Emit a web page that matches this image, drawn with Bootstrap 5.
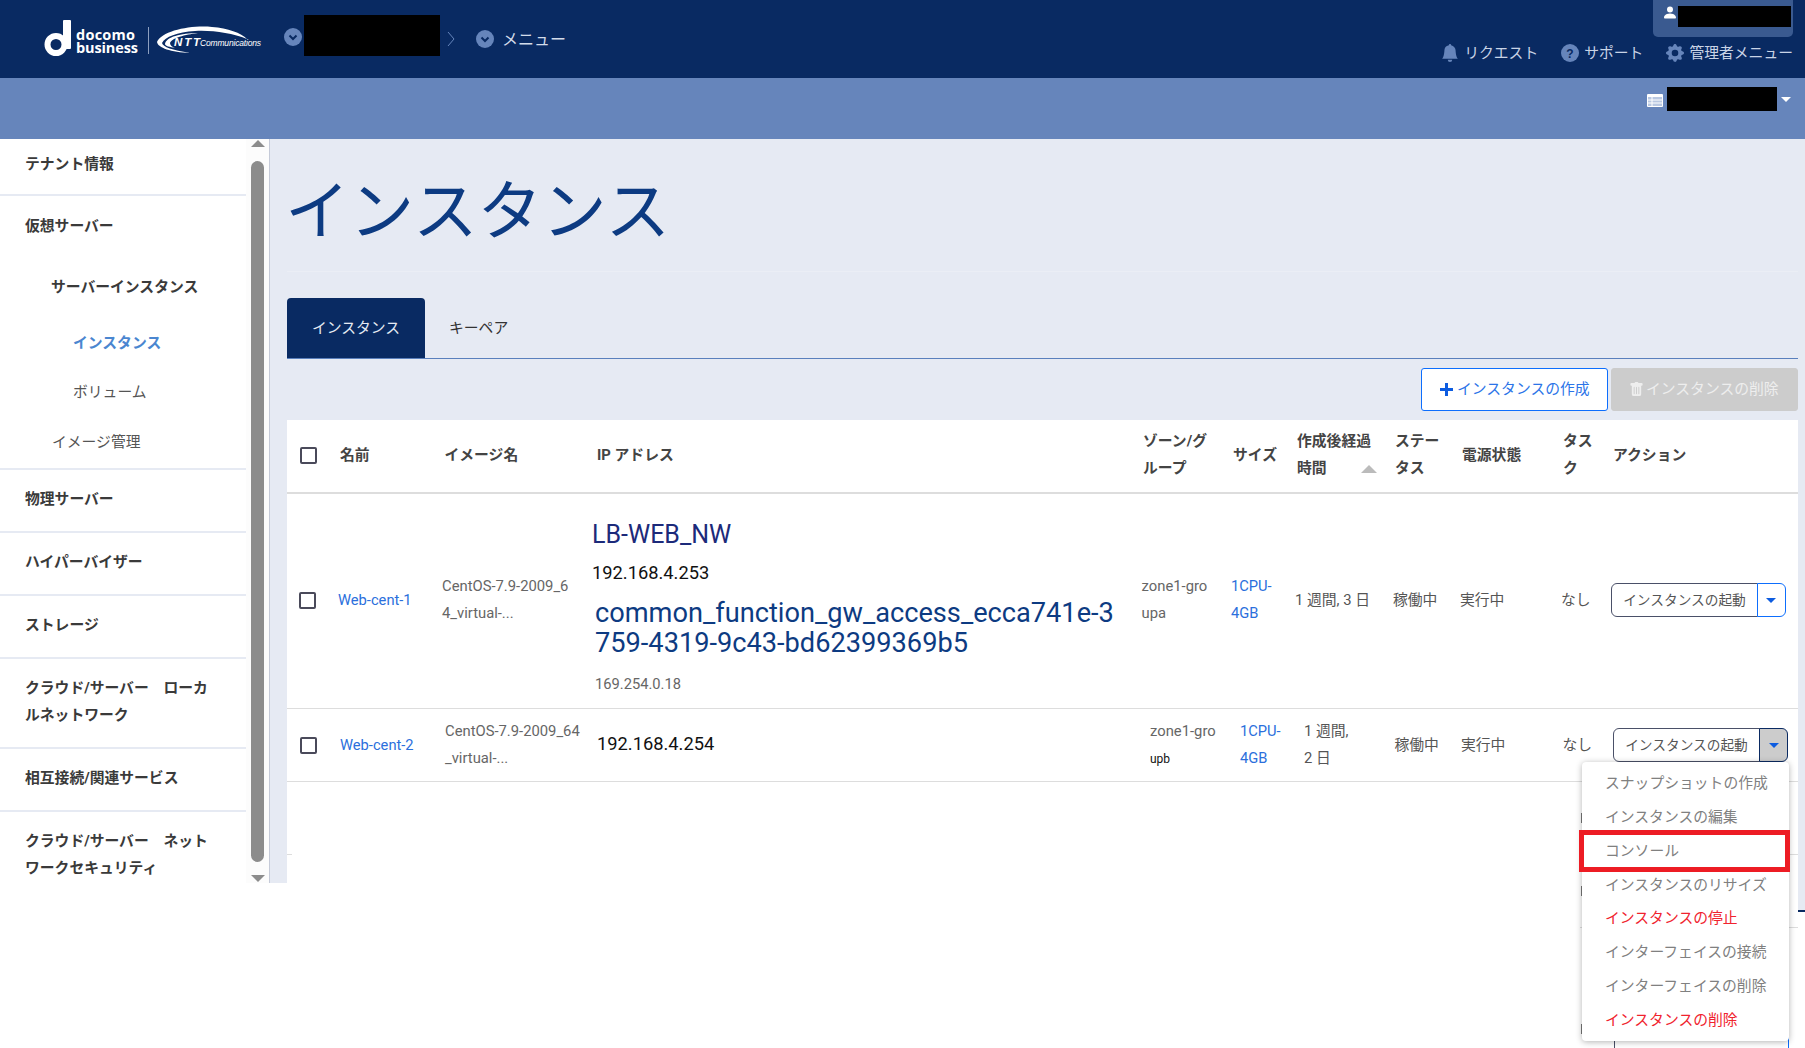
<!DOCTYPE html>
<html lang="ja">
<head>
<meta charset="utf-8">
<title>インスタンス</title>
<link href="https://cdn.jsdelivr.net/npm/bootstrap@5.3.0/dist/css/bootstrap.min.css" rel="stylesheet">
<style>
html,body{height:1048px;overflow:hidden;background:#fff;}
body{font-family:Roboto,"Noto Sans CJK JP",sans-serif;font-size:14.8px;color:#555;}
.top-bar{height:78px;background:#092a62;color:#c9d4e6;}
.logo-svg{width:265px;height:78px;display:block;flex:none;}
.crumb-ic{width:18px;height:18px;flex:none;}
.crumb-a{margin-left:19px;margin-bottom:4px;}
.mask-a{width:136px;height:41px;background:#000;margin-left:2px;margin-bottom:7px;}
.crumb-sep{width:8px;height:14px;margin-left:7px;flex:none;}
.crumb-b{margin-left:21px;}
.crumb-text{margin-left:8px;color:#d3dcea;font-size:16px;line-height:20px;margin-top:2px;}
.top-right{width:364px;padding-right:12px;}
.user-tab{width:140px;height:37px;background:#3a5a90;border-radius:0 0 5px 5px;padding:6px 0 0 11px;}
.user-ic{width:12px;height:13px;fill:#fff;margin-right:2px;flex:none;}
.mask-b{width:113px;height:21px;background:#000;}
.top-links{margin-top:6px;height:20px;font-size:14.8px;line-height:20px;white-space:nowrap;}
.top-links svg{width:18px;height:18px;fill:#6685bb;flex:none;margin-right:5px;}
.link-gap{margin-left:23px;}
.tenant-bar{height:61px;background:#6685bb;padding-right:14px;padding-bottom:20px;}
.tenant-ic{width:16px;height:13px;flex:none;margin-right:4px;margin-top:3px;}
.mask-c{width:110px;height:24px;background:#000;}
.tenant-caret{width:0;height:0;border-left:5px solid transparent;border-right:5px solid transparent;border-top:5px solid #fff;margin-left:4px;margin-top:2px;}
.side{width:270px;height:744px;flex:none;background:#fff;border-right:1px solid #c5cad8;overflow:hidden;}
.side-list{width:246px;flex:none;}
.side-sec{border-bottom:2px solid #e6eaf3;padding:16px 25px 18px;line-height:27px;font-weight:700;color:#3a3a3a;}
.side-sec.first{padding-top:12px;padding-bottom:16px;}
.side-sec.group{padding:17px 25px 12px;}
.side-sub{font-weight:700;color:#3a3a3a;padding:34px 0 0 26px;}
.side-act{font-weight:700;color:#4a86d0;padding:29px 0 0 48px;}
.side-plain{font-weight:400;color:#555;padding:22px 0 0 48px;}
.side-plain2{font-weight:400;color:#555;padding:23px 0 0 27px;}
.side-rail{width:23px;background:#fcfcfc;padding-left:5px;flex:none;}
.rail-up{width:0;height:0;border-left:7px solid transparent;border-right:7px solid transparent;border-bottom:7px solid #8c8c8c;margin-top:1px;}
.rail-thumb{width:13px;height:701px;margin-top:14px;background:#8c8c8c;border-radius:7px;}
.rail-down{width:0;height:0;border-left:7px solid transparent;border-right:7px solid transparent;border-top:7px solid #8c8c8c;margin-top:13px;}
.gut-l{width:17px;height:744px;background:#e6eaf3;flex:none;}
.gut-r{width:7px;height:773px;background:#e6eaf3;border-bottom:2px solid #0a2a62;flex:none;}
.center{width:1511px;flex:none;}
.upper{background:#e6eaf3;height:281px;}
.title-wrap{height:133px;border-bottom:1px solid #ebeef5;padding-top:31px;}
.page-title{font-size:64.6px;line-height:84px;font-weight:400;color:#0d3b82;margin:0 0 0 -2px;padding:0;}
.tab-row{margin-top:26px;height:61px;border-bottom:1px solid #5a80bd;}
.tab-row .nav-link{border:0;height:60px;padding:0;display:flex;align-items:center;font-size:14.8px;border-radius:4px 4px 0 0;background:transparent;color:#333;}
.tab-row .nav-link.active{width:138px;justify-content:center;background:#092a62;color:#e6eaf3;}
.tab-row .nav-link.plain{margin-left:24px;}
.act-row{margin-top:9px;gap:3px;}
.btn-new,.btn-del{height:43px;padding:0;font-size:14.8px;display:flex;align-items:center;border-radius:3px;}
.btn-new{width:187px;padding-left:18px;background:#fff;border:1px solid #0d6efd;color:#2b74e8;}
.btn-del,.btn-del:disabled{width:187px;padding-left:18px;background:#ccc;border:1px solid #ccc;color:#eee;opacity:1;}
.btn-new svg{width:13px;height:13px;margin-right:4px;fill:#0d5ce0;}
.btn-del svg{width:13px;height:15px;margin-right:3px;fill:#eee;}
.grid-cells{display:grid;align-items:center;line-height:27px;border-bottom:1px solid #ddd;background:#fff;}
.head-row{height:74px;border-bottom:2px solid #ddd;padding-left:13px;padding-bottom:2px;grid-template-columns:40px 104.5px 152.5px 546px 90px 64px 98px 67px 101px 50px auto;font-weight:700;color:#444;}
.row-one{height:215px;padding-left:12px;padding-bottom:2px;grid-template-columns:39px 104px 150px 549.6px 89.4px 64px 98px 67px 101px 50px 175px;}
.row-two{height:73px;padding-left:13px;grid-template-columns:40px 105px 152px 553px 90px 64px 90.5px 66.5px 101.5px 50.5px 175px;}
.tick.form-check-input{width:17px;height:17px;margin:0;border:2px solid #4a4a5a;border-radius:2px;background-color:#fff;}
.vm-link{color:#2b6fdc;text-decoration:none;font-size:14.7px;}
.small-cell{font-size:14.8px;color:#666;white-space:nowrap;}
.num-link{color:#2b6fdc;font-size:14.7px;text-decoration:none;}
.ip-col{align-self:start;padding-top:26px;}
.net-a{font-size:25px;line-height:30px;color:#1c2a7a;}
.addr-a{font-size:18.3px;line-height:27px;color:#111;margin-top:9px;}
.net-b{font-size:27.2px;line-height:30px;color:#0d3b82;margin-top:12px;padding-left:3px;word-break:break-all;width:530px;}
.addr-b{font-size:14.7px;line-height:27px;color:#666;margin-top:13px;padding-left:3px;}
.addr-c{font-size:18.3px;color:#111;line-height:27px;margin-bottom:4px;}
.zone-tail{font-size:12px;color:#111;}
.sort-up{display:inline-block;width:0;height:0;border-left:8px solid transparent;border-right:8px solid transparent;border-bottom:8px solid #bbb;margin-left:34px;}
.start-grp .btn{height:34px;font-size:13.7px;padding:0;line-height:32px;}
.start-main{width:147px;background:#fff;border:1px solid #4a5068;color:#555;}
.start-tog{width:29px;background:#fff;border:1px solid #0d6efd;color:#0d5ce0;}
.start-tog.dropdown-toggle::after{margin-left:0;border-top-width:5.5px;border-left-width:5px;border-right-width:5px;border-bottom:0;vertical-align:2px;}
.start-tog.open{background:#ccc;border-color:#0a2a62;}
.start-menu.dropdown-menu{display:block;position:absolute;top:34px;right:-1px;left:auto;width:207px;min-width:207px;padding:5px 0 3px;margin:0;border:0;border-radius:4px;box-shadow:0 1px 6px rgba(0,0,0,.3);z-index:5;font-size:14.8px;}
.start-menu .dropdown-item{height:33.85px;padding:0 0 0 23px;line-height:33.85px;color:#808080;white-space:nowrap;}
.start-menu .dropdown-item.stop{color:#f0232e;}
.mark-box{position:absolute;left:-3px;top:68px;width:211px;height:42px;border:5px solid #ed1c24;pointer-events:none;}
.ghost{height:73px;}
.ghost-l{width:5px;border-bottom:1px solid #ddd;}
.ghost-r{width:218px;border-bottom:1px solid #ddd;}
.ghost-mark{width:2px;height:10px;background:#777;margin-left:1px;}
.ghost-last{height:130px;}
.ghost-wrap{width:218px;}
.ghost-wrap .ghost-mark{margin-top:96px;}
.ghost-btn{width:175px;height:34px;margin-left:31px;margin-top:94px;border:1px solid #4a5068;border-right:1px solid #0d6efd;border-radius:4px;}
</style>
</head>
<body>
<header class="top-bar d-flex justify-content-between">
  <div class="d-flex align-items-center">
    <svg class="logo-svg" viewBox="0 0 265 78" aria-label="docomo business | NTT Communications">
      <path fill="#fff" fill-rule="evenodd" d="M44.500 44.500a11.500 11.500 0 1 0 23 0a11.500 11.500 0 1 0-23 0zM50.500 44.500a5.500 5.500 0 1 0 11 0a5.500 5.500 0 1 0-11 0z"/>
      <rect x="63" y="20" width="8" height="29" rx="1" fill="#fff"/>
      <text x="76" y="40" fill="#fff" font-family="Open Sans,sans-serif" font-size="14.500" font-weight="700" textLength="59">docomo</text>
      <text x="76" y="53" fill="#fff" font-family="Open Sans,sans-serif" font-size="14.500" font-weight="700" textLength="62">business</text>
      <rect x="148" y="27" width="1" height="27" fill="#8d9fc0"/>
      <path fill="#fff" d="M157 42C162 31 190 25 212 27C228 28 241 33 247 39C232 33 212 30 195 31C177 32 165 37 162 43C163 47 172 50 190 53C171 52 158 48 157 42Z"/>
      <path fill="#fff" d="M165 44C166 37 181 33 198 33C190 34 172 37 170 43C170 45 172 47 175 48C170 47 165 46 165 44Z"/>
      <text x="174" y="46" fill="#fff" font-family="Liberation Sans,sans-serif" font-size="11.500" font-weight="700" font-style="italic" textLength="26">NTT</text>
      <text x="200" y="46" fill="#fff" font-family="Liberation Sans,sans-serif" font-size="8.500" font-style="italic" textLength="61">Communications</text>
    </svg>
    <svg class="crumb-ic crumb-a" viewBox="0 0 18 18"><circle cx="9" cy="9" r="9" fill="#6685bb"/><path d="M5.500 7.500 9 11l3.500-3.500" fill="none" stroke="#092a62" stroke-width="2"/></svg>
    <div class="mask-a"></div>
    <svg class="crumb-sep" viewBox="0 0 8 14"><path d="M1 0l6 7-6 7" fill="none" stroke="#6685bb" stroke-width="1"/></svg>
    <svg class="crumb-ic crumb-b" viewBox="0 0 18 18"><circle cx="9" cy="9" r="9" fill="#6685bb"/><path d="M5.500 7.500 9 11l3.500-3.500" fill="none" stroke="#092a62" stroke-width="2"/></svg>
    <span class="crumb-text">メニュー</span>
  </div>
  <div class="top-right d-flex flex-column align-items-end">
    <div class="user-tab d-flex align-items-start">
      <svg class="user-ic" viewBox="2 2 12 12"><path d="M3 14s-1 0-1-1 1-4 6-4 6 3 6 4-1 1-1 1H3zm5-6a3 3 0 1 0 0-6 3 3 0 0 0 0 6z"/></svg>
      <div class="mask-b"></div>
    </div>
    <div class="top-links d-flex align-items-center">
      <svg viewBox="0 0 16 16"><path d="M8 16a2 2 0 0 0 2-2H6a2 2 0 0 0 2 2zm.995-14.901a1 1 0 1 0-1.990 0A5.002 5.002 0 0 0 3 6c0 1.098-.5 6-2 7h14c-1.500-1-2-5.902-2-7 0-2.420-1.720-4.440-4.005-4.901z"/></svg>
      <span>リクエスト</span>
      <svg class="link-gap" viewBox="0 0 18 18"><circle cx="9" cy="9" r="9"/><text x="9" y="13.500" text-anchor="middle" fill="#092a62" font-family="Liberation Sans,sans-serif" font-weight="700" font-size="12">?</text></svg>
      <span>サポート</span>
      <svg class="link-gap" viewBox="0 0 16 16"><path fill-rule="evenodd" d="M9.405 1.050c-.413-1.400-2.397-1.400-2.810 0l-.1.340a1.464 1.464 0 0 1-2.105.872l-.31-.17c-1.283-.698-2.686.705-1.987 1.987l.169.311c.446.820.023 1.841-.872 2.105l-.34.1c-1.400.413-1.400 2.397 0 2.810l.34.1a1.464 1.464 0 0 1 .872 2.105l-.17.31c-.698 1.283.705 2.686 1.987 1.987l.311-.169a1.464 1.464 0 0 1 2.105.872l.1.34c.413 1.400 2.397 1.400 2.810 0l.1-.34a1.464 1.464 0 0 1 2.105-.872l.31.17c1.283.698 2.686-.705 1.987-1.987l-.169-.311a1.464 1.464 0 0 1 .872-2.105l.34-.1c1.400-.413 1.400-2.397 0-2.810l-.34-.1a1.464 1.464 0 0 1-.872-2.105l.17-.31c.698-1.283-.705-2.686-1.987-1.987l-.311.169a1.464 1.464 0 0 1-2.105-.872l-.1-.34zM8 10.930a2.929 2.929 0 1 1 0-5.860 2.929 2.929 0 0 1 0 5.858z"/></svg>
      <span>管理者メニュー</span>
    </div>
  </div>
</header>
<div class="tenant-bar d-flex justify-content-end align-items-center">
  <svg class="tenant-ic" viewBox="0 0 16 13"><rect width="16" height="13" rx="1" fill="#fff"/><rect x="1" y="3" width="14" height="9" fill="#b9c8e2"/><path d="M1 6h14M1 9h14M5 3v9" stroke="#fff" stroke-width="1"/></svg>
  <div class="mask-c"></div>
  <div class="tenant-caret"></div>
</div>
<div class="d-flex align-items-start">
  <aside class="side d-flex">
    <nav class="side-list">
      <div class="side-sec first">テナント情報</div>
      <div class="side-sec group">
        <div>仮想サーバー</div>
        <div class="side-sub">サーバーインスタンス</div>
        <div class="side-act">インスタンス</div>
        <div class="side-plain">ボリューム</div>
        <div class="side-plain2">イメージ管理</div>
      </div>
      <div class="side-sec">物理サーバー</div>
      <div class="side-sec">ハイパーバイザー</div>
      <div class="side-sec">ストレージ</div>
      <div class="side-sec">クラウド/サーバー　ローカ<br>ルネットワーク</div>
      <div class="side-sec">相互接続/関連サービス</div>
      <div class="side-sec">クラウド/サーバー　ネット<br>ワークセキュリティ</div>
    </nav>
    <div class="side-rail">
      <div class="rail-up"></div>
      <div class="rail-thumb"></div>
      <div class="rail-down"></div>
    </div>
  </aside>
  <div class="gut-l"></div>
  <main class="center">
    <div class="upper">
      <div class="title-wrap"><h1 class="page-title">インスタンス</h1></div>
      <ul class="nav tab-row">
        <li class="nav-item"><a class="nav-link active" href="#">インスタンス</a></li>
        <li class="nav-item"><a class="nav-link plain" href="#">キーペア</a></li>
      </ul>
      <div class="act-row d-flex justify-content-end">
        <button class="btn btn-new" type="button"><svg viewBox="0 0 13 13"><path d="M5 0h3v5h5v3H8v5H5V8H0V5h5z"/></svg>インスタンスの作成</button>
        <button class="btn btn-del" type="button" disabled><svg viewBox="1.500 0 13 16"><path fill-rule="evenodd" d="M2.500 1a1 1 0 0 0-1 1v1a1 1 0 0 0 1 1H3v9a2 2 0 0 0 2 2h6a2 2 0 0 0 2-2V4h.5a1 1 0 0 0 1-1V2a1 1 0 0 0-1-1H10a1 1 0 0 0-1-1H7a1 1 0 0 0-1 1H2.500zm3 4a.5.5 0 0 1 .5.5v7a.5.5 0 0 1-1 0v-7a.5.5 0 0 1 .5-.5zM8 5a.5.5 0 0 1 .5.5v7a.5.5 0 0 1-1 0v-7A.5.5 0 0 1 8 5zm3 .5v7a.5.5 0 0 1-1 0v-7a.5.5 0 0 1 1 0z"/></svg>インスタンスの削除</button>
      </div>
    </div>
    <div class="grid-cells head-row">
      <input class="form-check-input tick" type="checkbox" aria-label="select all">
      <div>名前</div>
      <div>イメージ名</div>
      <div>IP アドレス</div>
      <div>ゾーン/グ<br>ループ</div>
      <div>サイズ</div>
      <div>作成後経過<br>時間<span class="sort-up"></span></div>
      <div>ステー<br>タス</div>
      <div>電源状態</div>
      <div>タス<br>ク</div>
      <div>アクション</div>
    </div>
    <div class="grid-cells row-one">
      <input class="form-check-input tick" type="checkbox" aria-label="Web-cent-1">
      <div><a class="vm-link" href="#">Web-cent-1</a></div>
      <div class="small-cell">CentOS-7.9-2009_6<br>4_virtual-...</div>
      <div class="ip-col">
        <div class="net-a">LB-WEB_NW</div>
        <div class="addr-a">192.168.4.253</div>
        <div class="net-b">common_function_gw_access_ecca741e-3759-4319-9c43-bd62399369b5</div>
        <div class="addr-b">169.254.0.18</div>
      </div>
      <div class="small-cell">zone1-gro<br>upa</div>
      <div><a class="num-link" href="#">1CPU-<br>4GB</a></div>
      <div>1 週間, 3 日</div>
      <div>稼働中</div>
      <div>実行中</div>
      <div>なし</div>
      <div class="btn-group start-grp">
        <button class="btn start-main" type="button">インスタンスの起動</button>
        <button class="btn start-tog dropdown-toggle" type="button" aria-label="menu"></button>
      </div>
    </div>
    <div class="grid-cells row-two">
      <input class="form-check-input tick" type="checkbox" aria-label="Web-cent-2">
      <div><a class="vm-link" href="#">Web-cent-2</a></div>
      <div class="small-cell">CentOS-7.9-2009_64<br>_virtual-...</div>
      <div class="addr-c">192.168.4.254</div>
      <div class="small-cell">zone1-gro<br><span class="zone-tail">upb</span></div>
      <div><a class="num-link" href="#">1CPU-<br>4GB</a></div>
      <div>1 週間,<br>2 日</div>
      <div>稼働中</div>
      <div>実行中</div>
      <div>なし</div>
      <div class="btn-group start-grp">
        <button class="btn start-main" type="button">インスタンスの起動</button>
        <button class="btn start-tog open dropdown-toggle" type="button" aria-label="menu"></button>
        <div class="dropdown-menu start-menu">
          <a class="dropdown-item" href="#">スナップショットの作成</a>
          <a class="dropdown-item" href="#">インスタンスの編集</a>
          <a class="dropdown-item" href="#">コンソール</a>
          <a class="dropdown-item" href="#">インスタンスのリサイズ</a>
          <a class="dropdown-item stop" href="#">インスタンスの停止</a>
          <a class="dropdown-item" href="#">インターフェイスの接続</a>
          <a class="dropdown-item" href="#">インターフェイスの削除</a>
          <a class="dropdown-item stop" href="#">インスタンスの削除</a>
          <div class="mark-box"></div>
        </div>
      </div>
    </div>
    <div class="ghost d-flex justify-content-between">
      <div class="ghost-l"></div>
      <div class="ghost-r d-flex align-items-center"><div class="ghost-mark"></div></div>
    </div>
    <div class="ghost d-flex justify-content-between">
      <div></div>
      <div class="ghost-r d-flex align-items-center"><div class="ghost-mark"></div></div>
    </div>
    <div class="ghost-last d-flex justify-content-end">
      <div class="ghost-wrap d-flex align-items-start">
        <div class="ghost-mark"></div>
        <div class="ghost-btn"></div>
      </div>
    </div>
  </main>
  <div class="gut-r"></div>
</div>
</body>
</html>
